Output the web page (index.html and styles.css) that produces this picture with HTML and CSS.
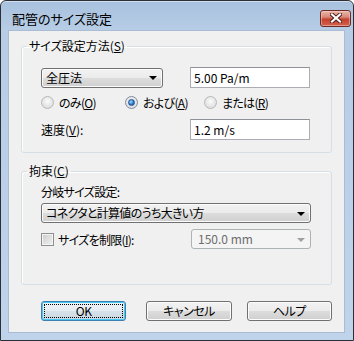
FILE: index.html
```html
<!DOCTYPE html>
<html lang="ja">
<head>
  <meta charset="UTF-8" />
  <title>配管のサイズ設定</title>
  <link rel="stylesheet" href="styles.css">
</head>
<body>
  <div class="window">
    <div class="titlebar">
      <span class="title">配管のサイズ設定</span>
      <span class="close">
        <svg width="12" height="10" viewBox="0 0 12 10">
          <path d="M2 1.5 L10 8.5 M10 1.5 L2 8.5" stroke="#4a1a16" stroke-width="4" stroke-linecap="square"/>
          <path d="M2 1.5 L10 8.5 M10 1.5 L2 8.5" stroke="#fff" stroke-width="2.2" stroke-linecap="square"/>
        </svg>
      </span>
    </div>

    <div class="client">
      <fieldset class="group">
        <legend>サイズ設定方法(<u>S</u>)</legend>
        <div class="group-body body-method">
          <div class="row row-first">
            <div class="combo combo-method"><span>全圧法</span><i class="arrow"></i></div>
            <div class="field">5.00 Pa/m</div>
          </div>
          <div class="row row-radios">
            <label class="opt opt-only"><span class="radio"></span><span class="tight">のみ(<u>O</u>)</span></label>
            <label class="opt opt-and"><span class="radio checked"></span><span class="tight">および(<u>A</u>)</span></label>
            <label class="opt"><span class="radio"></span><span class="tight">または(<u>R</u>)</span></label>
          </div>
          <div class="row row-speed">
            <span class="label-speed">速度(<u>V</u>):</span>
            <div class="field">1.2 m/s</div>
          </div>
        </div>
      </fieldset>

      <fieldset class="group group-limit">
        <legend>拘束(<u>C</u>)</legend>
        <div class="group-body body-limit">
          <div class="branch-label tight">分岐サイズ設定:</div>
          <div class="combo combo-wide"><span class="tight">コネクタと計算値のうち大きい方</span><i class="arrow"></i></div>
          <div class="row row-check">
            <label class="opt opt-check"><span class="checkbox"></span><span class="tight">サイズを制限(<u>I</u>):</span></label>
            <div class="combo combo-disabled"><span>150.0 mm</span><i class="arrow"></i></div>
          </div>
        </div>
      </fieldset>

      <div class="buttons">
        <button class="btn btn-default">OK</button>
        <button class="btn btn-cancel">キャンセル</button>
        <button class="btn">ヘルプ</button>
      </div>
    </div>
  </div>
</body>
</html>
```

FILE: styles.css
```css
html, body {
  margin: 0;
  padding: 0;
  background: #fff;
}
body {
  font-family: "Noto Sans CJK JP", "Noto Sans", sans-serif;
  font-size: 12px;
  color: #000;
}
u {
  text-decoration: underline;
  text-underline-offset: 1px;
}
.tight {
  letter-spacing: -0.7px;
}
.window {
  width: 354px;
  height: 341px;
  box-sizing: border-box;
  border: 1px solid #2b2f36;
  border-radius: 6px 6px 0 0;
  background: linear-gradient(to bottom, #a8c1de 0, #b7cde6 29px, #bfd4eb 100%);
  padding: 0 8px 7px 7px;
  box-shadow: inset 0 1px 0 rgba(255, 255, 255, 0.5);
}
.titlebar {
  height: 29px;
  display: flex;
  align-items: center;
  justify-content: space-between;
  padding-top: 5px;
  box-sizing: border-box;
}
.title {
  font-size: 13px;
  font-feature-settings: "palt";
  margin-left: 4px;
  color: #000;
}
.close {
  width: 29px;
  height: 15px;
  margin-right: -6px;
  border: 1px solid #6b2a24;
  border-radius: 3px;
  background: linear-gradient(to bottom, #e9b7aa 0, #d98a7a 40%, #c4412f 55%, #d2634d 100%);
  box-shadow: inset 0 0 0 1px rgba(255, 220, 210, 0.45);
  display: flex;
  align-items: center;
  justify-content: center;
}
.client {
  height: 303px;
  box-sizing: border-box;
  background: #f0f0f0;
  border: 1px solid #a9bcd3;
  padding: 8px 12px 0 12px;
}
.group {
  margin: 0;
  padding: 0;
  border: 1px solid #d5dfe5;
  border-radius: 3px;
  box-shadow: inset 1px 1px 0 #fff;
  min-width: 0;
}
.group legend {
  margin-left: 5px;
  padding: 0 2px;
  line-height: 14px;
  font-feature-settings: "palt";
}
.group-limit {
  margin-top: 11px;
}
.group-body {
  padding-left: 19px;
  font-feature-settings: "palt";
}
.body-method {
  padding-top: 14px;
  padding-bottom: 12px;
}
.body-limit {
  padding-top: 7px;
  padding-bottom: 35px;
}
.row {
  display: flex;
  align-items: center;
}
.row-radios {
  margin-top: 7px;
  height: 14px;
}
.row-speed {
  margin-top: 10px;
}
.label-speed {
  width: 149px;
}
.combo {
  height: 20px;
  box-sizing: border-box;
  border: 1px solid #707070;
  border-radius: 3px;
  background: linear-gradient(to bottom, #f2f2f2 0, #ebebeb 50%, #dddddd 50%, #cfcfcf 100%);
  box-shadow: inset 0 0 0 1px #fcfcfc;
  display: flex;
  align-items: center;
  justify-content: space-between;
  padding: 0 5px 0 4px;
  line-height: 16px;
}
.arrow {
  width: 0;
  height: 0;
  border-left: 4px solid transparent;
  border-right: 4px solid transparent;
  border-top: 4px solid #000;
  margin-top: 1px;
}
.combo-method {
  width: 122px;
}
.combo-wide {
  width: 270px;
  margin-top: 4px;
}
.combo-disabled {
  width: 120px;
  border-color: #adb2b5;
  background: #f4f4f4;
  box-shadow: none;
  color: #6d6d6d;
  padding-left: 6px;
}
.combo-disabled .arrow {
  border-top-color: #a0a0a0;
}
.field {
  width: 120px;
  height: 21px;
  box-sizing: border-box;
  margin-left: 27px;
  border: 1px solid #abadb3;
  border-top-color: #8e9297;
  background: #fff;
  padding: 0 3px;
  line-height: 19px;
}
.row-speed .field {
  margin-left: 0;
}
.opt {
  display: flex;
  align-items: center;
}
.opt-only {
  width: 84px;
}
.opt-and {
  width: 79px;
}
.radio {
  width: 13px;
  height: 13px;
  box-sizing: border-box;
  border-radius: 50%;
  border: 1px solid #b8b8b8;
  background: radial-gradient(circle at 50% 40%, #fbfbfb 0, #e6e6e6 55%, #d4d4d4 100%);
  margin-right: 5px;
  display: flex;
  align-items: center;
  justify-content: center;
}
.radio.checked {
  border-color: #7d8ba0;
}
.radio.checked::before {
  content: "";
  width: 5px;
  height: 5px;
  border-radius: 50%;
  background: radial-gradient(circle at 35% 35%, #a6dcfb 0, #2f7ed0 55%, #154a94 100%);
  border: 1px solid #1b4f8c;
}
.branch-label {
  line-height: 14px;
}
.row-check {
  margin-top: 6px;
}
.opt-check {
  width: 150px;
}
.checkbox {
  width: 13px;
  height: 13px;
  box-sizing: border-box;
  border: 1px solid #8e8f8f;
  background: linear-gradient(135deg, #cbcbcb 0, #e3e3e3 60%, #f0f0f0 100%);
  box-shadow: inset 0 0 0 1px #f4f4f4;
  margin-right: 4px;
}
.buttons {
  display: flex;
  margin-top: 16px;
  padding-left: 20px;
}
.btn {
  width: 86px;
  height: 20px;
  box-sizing: border-box;
  border: 1px solid #707070;
  border-radius: 3px;
  background: linear-gradient(to bottom, #f2f2f2 0, #ebebeb 50%, #dddddd 50%, #cfcfcf 100%);
  box-shadow: inset 0 0 0 1px #fcfcfc;
  font-family: "Noto Sans CJK JP", "Noto Sans", sans-serif;
  font-size: 12px;
  font-feature-settings: "palt";
  letter-spacing: -0.5px;
  color: #000;
  padding: 0;
  line-height: 16px;
  margin-left: 15px;
}
.btn-default {
  margin-left: 0;
  border-color: #3c7fb1;
  box-shadow: inset 0 0 0 1px #48c8f0;
  background: linear-gradient(to bottom, #eef3f7 0, #e5ecf1 50%, #d6e1e9 50%, #cad8e3 100%);
  outline: 1px dotted #000;
  outline-offset: -4px;
}
.btn-cancel {
  margin-left: 20px;
}
```
